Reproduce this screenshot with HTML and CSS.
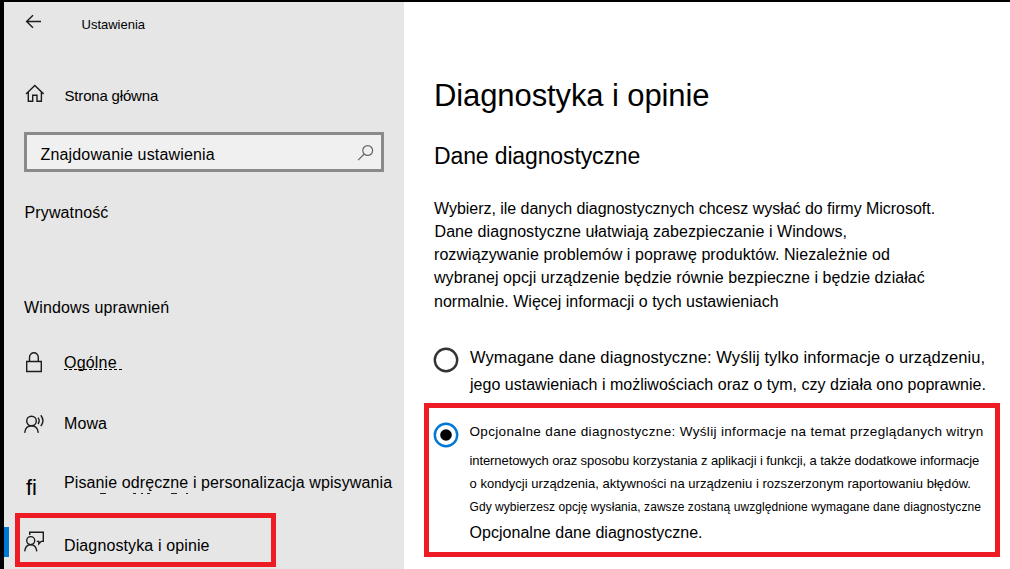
FILE: index.html
```
<!DOCTYPE html>
<html lang="pl">
<head>
<meta charset="utf-8">
<title>Ustawienia</title>
<link rel="stylesheet" href="styles.css">
</head>
<body>
<div class="window">
  <aside class="sidebar">
    <header class="row titlebar">
      <svg class="icon" width="20" height="20" viewBox="0 0 20 20"><path d="M2.5 9.5H17M9 3.2L2.6 9.5L9 15.8"/></svg>
      <span class="window-title">Ustawienia</span>
    </header>
    <div class="row home">
      <svg class="icon" width="20" height="20" viewBox="0 0 20 20"><path d="M2 10.9L10.8 2.4L19.6 10.9M4.3 9V18.3H8.7V12.3H13V18.3H17.4V9"/></svg>
      <span class="label home-label">Strona główna</span>
    </div>
    <div class="search">
      <span class="search-text">Znajdowanie ustawienia</span>
      <svg class="search-icon" width="18" height="18" viewBox="0 0 18 18"><circle cx="11.7" cy="6.5" r="4.9"/><path d="M8.2 10L2.1 16.2"/></svg>
    </div>
    <div class="heading privacy">Prywatność</div>
    <div class="heading permissions">Windows uprawnień</div>
    <nav class="nav">
      <div class="row general">
        <svg class="icon" width="20" height="24" viewBox="0 0 20 24"><path d="M2.7 10.5H17.3V20.5H2.7ZM5.5 10.5V6.6C5.5 0.2 14.3 0.2 14.3 6.6V10.5"/></svg>
        <span class="label general-label">Ogólne</span>
      </div>
      <div class="row speech">
        <svg class="icon" width="22" height="20" viewBox="0 0 22 20"><circle cx="7.5" cy="7" r="4.8"/><path d="M0.7 18.8C1.2 14.2 4 11.8 7.5 11.8S13.8 14.2 14.3 18.8M14 3.6Q16.4 6.5 14 10M16.8 1.2Q21 6.5 16.8 12.2"/></svg>
        <span class="label speech-label">Mowa</span>
      </div>
      <div class="row inking">
        <span class="icon glyph">fi</span>
        <span class="label inking-label">Pisanie odręczne i personalizacja wpisywania<svg class="traces" width="92" height="2" viewBox="0 0 92 2"><path d="M0 .5H6M33 .5H36M41 .5H43M47 .5H50M71 .5H77M86 .5H88"/></svg></span>
      </div>
      <div class="active">
        <div class="accent"></div>
        <div class="row active-box">
          <svg class="icon" width="22" height="22" viewBox="0 0 22 22"><circle cx="6.7" cy="9.6" r="4"/><path d="M0.7 20.3C1.2 16 3.5 13.7 6.7 13.7S12.3 16 12.8 20.3M5.7 4V1.3H19.3V10.4H17.2L14.8 13V10.4H12.7"/></svg>
          <span class="label active-label">Diagnostyka i opinie</span>
        </div>
      </div>
    </nav>
  </aside>
  <main class="content">
    <h1>Diagnostyka i opinie</h1>
    <h2>Dane diagnostyczne</h2>
    <div class="intro">
      <div class="i1">Wybierz, ile danych diagnostycznych chcesz wysłać do firmy Microsoft.</div>
      <div class="i2">Dane diagnostyczne ułatwiają zabezpieczanie i Windows,</div>
      <div class="i3">rozwiązywanie problemów i poprawę produktów. Niezależnie od</div>
      <div class="i4">wybranej opcji urządzenie będzie równie bezpieczne i będzie działać</div>
      <div class="i5">normalnie. Więcej informacji o tych ustawieniach</div>
    </div>
    <div class="option required">
      <svg class="radio" width="26" height="26" viewBox="0 0 26 26"><circle class="ring" cx="13" cy="13" r="11.2"/></svg>
      <div class="option-text">
        <div class="r1">Wymagane dane diagnostyczne: Wyślij tylko informacje o urządzeniu,</div>
        <div class="r2">jego ustawieniach i możliwościach oraz o tym, czy działa ono poprawnie.</div>
      </div>
    </div>
    <div class="option optional">
      <svg class="radio" width="26" height="26" viewBox="0 0 26 26"><circle class="ring selected" cx="13" cy="13" r="11.2"/><circle class="dot" cx="13" cy="13" r="5.8"/></svg>
      <div class="option-text">
        <div class="o1">Opcjonalne dane diagnostyczne: Wyślij informacje na temat przeglądanych witryn</div>
        <div class="o2">internetowych oraz sposobu korzystania z aplikacji i funkcji, a także dodatkowe informacje</div>
        <div class="o3">o kondycji urządzenia, aktywności na urządzeniu i rozszerzonym raportowaniu błędów.</div>
        <div class="o4">Gdy wybierzesz opcję wysłania, zawsze zostaną uwzględnione wymagane dane diagnostyczne</div>
        <div class="o5">Opcjonalne dane diagnostyczne.</div>
      </div>
    </div>
  </main>
</div>
</body>
</html>
```
FILE: styles.css
```
* { box-sizing: border-box; }
body {
  margin: 0;
  width: 1010px;
  height: 569px;
  overflow: hidden;
  background: #000;
  color: #000;
  font: 16px/20px "Liberation Sans", Arial, sans-serif;
  white-space: nowrap;
}
.window { display: flex; height: 569px; padding: 2px 0 0 4px; }
svg { display: block; fill: none; stroke: #1c1c1c; stroke-width: 1.4; flex: none; }

/* Sidebar */
.sidebar { width: 400px; height: 567px; background: #e6e6e6; overflow: hidden; flex: none; }
.row { display: flex; align-items: flex-start; height: 24px; padding-left: 20px; }
.icon { flex: none; }
.titlebar { margin-top: 10px; }
.window-title { margin: 3px 0 0 37.5px; font-size: 13px; }
.home { margin-top: 47px; }
.home-label { margin: 3px 0 0 20.5px; font-size: 15px; letter-spacing: -.18px; }
.search {
  display: flex;
  justify-content: space-between;
  margin: 25px 20px 0;
  height: 40px;
  padding: 9px 7.5px 0 13.5px;
  border: 3px solid #8a8a8a;
  background: #f0f0f0;
}
.search-text { margin-top: 1px; letter-spacing: .16px; }
.search-icon { stroke: #666; stroke-width: 1.2; }
.heading { padding-left: 20px; letter-spacing: .13px; }
.privacy { margin-top: 31px; padding-left: 20.5px; }
.permissions { margin-top: 75px; }
.nav { padding-top: 33px; }
.general-label { margin: 2px 0 0 20px; letter-spacing: .2px; height: 17px; border-bottom: 1px dashed #000; line-height: 20px; padding-right: 5px; }
.speech { margin-top: 39px; }
.speech-label { margin: 0 0 0 18px; letter-spacing: .1px; }
.inking { margin-top: 35px; }
.glyph { width: 40px; padding: 5px 0 0 2px; font-size: 22px; }
.inking-label { letter-spacing: .1px; }
.traces { margin: 0 0 0 36px; stroke: #222; stroke-width: 1; }
.active { display: flex; align-items: flex-start; margin-top: 16px; }
.accent { width: 5px; height: 30px; margin: 14px 6px 0 0; background: #0078d7; }
.active-box { width: 261px; height: 54px; padding: 13px 0 0 4px; border: 5px solid #ed1c24; }
.active-label { margin: 5px 0 0 18px; letter-spacing: .12px; }

/* Content */
.content { flex: 1; height: 567px; padding: 76px 10px 0 20px; background: #fff; }
h1, h2 { margin: 0 0 0 10px; font-weight: 400; }
h1 { font-size: 31px; line-height: 36px; letter-spacing: -.1px; }
h2 { margin-top: 28px; font-size: 23px; line-height: 28px; letter-spacing: -.13px; }
.intro { margin: 27px 0 0 10px; line-height: 23px; }
.i1 { letter-spacing: -.03px; }
.i2 { padding-left: .5px; letter-spacing: .08px; }
.i3 { letter-spacing: .07px; }
.i4 { letter-spacing: .065px; }
.i5 { padding-top: 1px; letter-spacing: .01px; }
.option { display: flex; }
.radio { margin-right: 11px; }
.ring { stroke: #333; stroke-width: 2.4; }
.selected { stroke: #0078d7; }
.dot { fill: #000; stroke: none; }
.required { margin-top: 34px; padding-left: 9px; height: 56px; }
.required .option-text { line-height: 28px; margin-top: -4px; }
.r1 { font-size: 16.5px; letter-spacing: .085px; }
.r2 { letter-spacing: .015px; }
.optional { height: 154px; width: 576px; padding: 14px 0 0 4px; border: 5px solid #ed1c24; }
.optional .radio { margin-right: 10.5px; }
.o1 { font-size: 13.5px; letter-spacing: .34px; }
.o2 { margin-top: 9px; font-size: 13px; letter-spacing: -.085px; }
.o3 { margin-top: 3px; font-size: 13px; letter-spacing: .035px; }
.o4 { margin-top: 3px; font-size: 12px; letter-spacing: .06px; }
.o5 { margin-top: 6px; letter-spacing: .03px; }
```
